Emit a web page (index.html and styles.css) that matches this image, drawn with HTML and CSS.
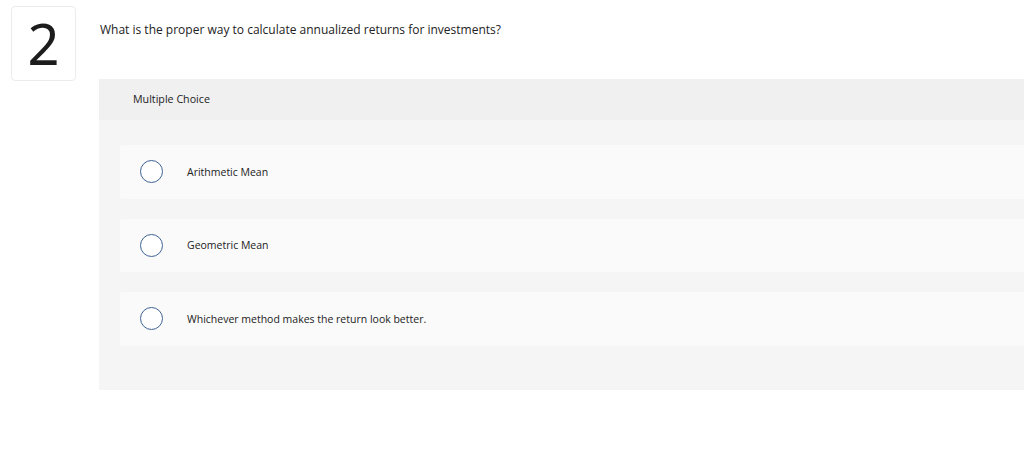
FILE: index.html
```html
<!DOCTYPE html>
<html lang="en">
<head>
    <meta charset="UTF-8">
    <meta name="viewport" content="width=device-width, initial-scale=1.0">
    <title>Question 2</title>

    <link rel="stylesheet" href="styles.css">
</head>
<body>
    <div class="question">
        <div class="number">2</div>

        <div class="content">
            <p class="prompt">What is the proper way to calculate annualized returns for investments?</p>

            <div class="panel">
                <div class="panel-head">Multiple Choice</div>
                <ul class="choices">
                    <li class="choice"><span class="radio"></span><span class="label">Arithmetic Mean</span></li>
                    <li class="choice"><span class="radio"></span><span class="label">Geometric Mean</span></li>
                    <li class="choice"><span class="radio"></span><span class="label">Whichever method makes the return look better.</span></li>
                </ul>
            </div><!-- panel -->
        </div><!-- content -->
    </div><!-- question -->
</body>
</html>
```

FILE: styles.css
```css
*{margin: 0;padding: 0;box-sizing: border-box;}
html, body{
    width: 100%;
    height: 100%;
    background: #fff;
    overflow: hidden;
}

body{
    font-family: "Open Sans", "Liberation Sans", sans-serif;
    color: #222;
}

ul, li{
    list-style: none;
}

.question{
    display: flex;
    padding: 6px 0 0 11px;
}

.number{
    flex: none;
    width: 65px;
    height: 75px;
    border: 1px solid #ececec;
    border-radius: 4px;
    display: flex;
    justify-content: center;
    align-items: center;
    font-family: "Noto Sans", sans-serif;
    font-weight: 400;
    font-size: 56px;
    color: #1c1c1c;
    padding-bottom: 2px;
}

.content{
    flex: 1;
    margin-left: 23px;
}

.prompt{
    font-size: 12px;
    line-height: 16px;
    padding: 16px 0 0 1px;
    height: 73px;
}

.panel{
    background: #f5f5f5;
    padding-bottom: 44.5px;
}

.panel-head{
    background: #f0f0f0;
    height: 41px;
    line-height: 41px;
    padding-left: 34px;
    font-size: 10.7px;
}

.choices{
    padding: 25px 0 0 21px;
}

.choice{
    display: flex;
    align-items: center;
    height: 53.5px;
    margin-bottom: 20px;
    background: #fafafa;
    border-radius: 2px 0 0 2px;
    padding-left: 20px;
    font-size: 10.5px;
}

.choice:last-child{
    margin-bottom: 0;
}

.radio{
    flex: none;
    width: 23px;
    height: 23px;
    border: 1px solid #3e6296;
    border-radius: 50%;
    background: #fff;
}

.label{
    margin-left: 24px;
}
```
